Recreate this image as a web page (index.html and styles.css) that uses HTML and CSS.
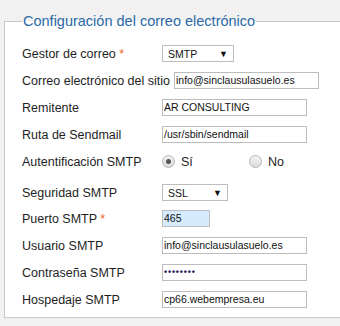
FILE: index.html
```html
<!DOCTYPE html>
<html>
<head>
    <meta charset="utf-8" />
    <title>Configuración del correo electrónico</title>
    <link rel="stylesheet" href="styles.css">
</head>
<body>
    <fieldset class="mailSettings">
        <legend>Configuración del correo electrónico</legend>

        <div class="row">
            <label>Gestor de correo <span class="star">*</span></label>
            <div class="select selMailer"><span>SMTP</span><span class="arrow">▼</span></div>
        </div>
        <div class="row">
            <label>Correo electrónico del sitio</label>
            <div class="field">info@sinclausulasuelo.es</div>
        </div>
        <div class="row">
            <label>Remitente</label>
            <div class="field">AR CONSULTING</div>
        </div>
        <div class="row">
            <label>Ruta de Sendmail</label>
            <div class="field">/usr/sbin/sendmail</div>
        </div>
        <div class="row radioRow">
            <label>Autentificación SMTP</label>
            <div class="radios">
                <span class="radio checked"></span><span class="radioText">Sí</span>
                <span class="radio"></span><span class="radioText">No</span>
            </div>
        </div>
        <div class="row selectRow">
            <label>Seguridad SMTP</label>
            <div class="select selSecure"><span>SSL</span><span class="arrow">▼</span></div>
        </div>
        <div class="row">
            <label>Puerto SMTP <span class="star">*</span></label>
            <div class="field port">465</div>
        </div>
        <div class="row">
            <label>Usuario SMTP</label>
            <div class="field">info@sinclausulasuelo.es</div>
        </div>
        <div class="row">
            <label>Contraseña SMTP</label>
            <div class="field pass">••••••••</div>
        </div>
        <div class="row">
            <label>Hospedaje SMTP</label>
            <div class="field">cp66.webempresa.eu</div>
        </div>
    </fieldset>
</body>
</html>
```

FILE: styles.css
```css
body {
    margin: 0;
    padding: 0;
    background: #f1f1f1;
    font-family: "Liberation Sans", Arial, sans-serif;
    overflow: hidden;
}

.mailSettings {
    margin: 14px 0 0 4px;
    width: 380px;
    padding: 17px 0 21px 17px;
    border: 1px solid #c9c9c9;
    border-right: 0;
    background: #fff;
    box-sizing: border-box;
    height: 304px;
}

.mailSettings legend {
    color: #2b6aa6;
    font-size: 14.5px;
    padding: 0 1px;
    margin-left: 0;
    line-height: 14px;
}

.row {
    display: flex;
    align-items: center;
    height: 17px;
    margin-bottom: 10px;
}

.row.radioRow {
    margin-bottom: 14px;
}

.row.selectRow {
    margin-bottom: 9px;
}

.row label {
    min-width: 136px;
    margin-right: 4px;
    font-size: 12.5px;
    color: #1e1e1e;
    white-space: nowrap;
}

.star {
    color: #f0601e;
}

.field {
    width: 145px;
    height: 17px;
    box-sizing: border-box;
    border: 1px solid #bdbdbd;
    padding: 0 2px 0 1px;
    font-size: 10.5px;
    line-height: 15px;
    color: #111;
    white-space: nowrap;
    overflow: hidden;
}

.field.port {
    width: 48px;
    background: #d6ebfd;
}

.field.pass {
    font-size: 9px;
    font-weight: bold;
    letter-spacing: 0.8px;
    color: #1a1a55;
}

.select {
    display: flex;
    justify-content: space-between;
    align-items: center;
    height: 17px;
    box-sizing: border-box;
    border: 1px solid #bdbdbd;
    padding: 0 5px 0 5px;
    font-size: 10.5px;
    color: #111;
}

.selMailer {
    width: 72px;
}

.selSecure {
    width: 66px;
}

.arrow {
    font-size: 9px;
}

.radios {
    display: flex;
    align-items: center;
}

.radio {
    width: 11px;
    height: 11px;
    border: 1px solid #b5b5b5;
    border-radius: 50%;
    background: linear-gradient(#f4f4f4, #dcdcdc);
    margin: 0 6px 0 0;
    position: relative;
}

.radio.checked::after {
    content: "";
    position: absolute;
    left: 3px;
    top: 3px;
    width: 5px;
    height: 5px;
    border-radius: 50%;
    background: #555;
}

.radioText {
    font-size: 12.5px;
    color: #1e1e1e;
    width: 68px;
}
```
